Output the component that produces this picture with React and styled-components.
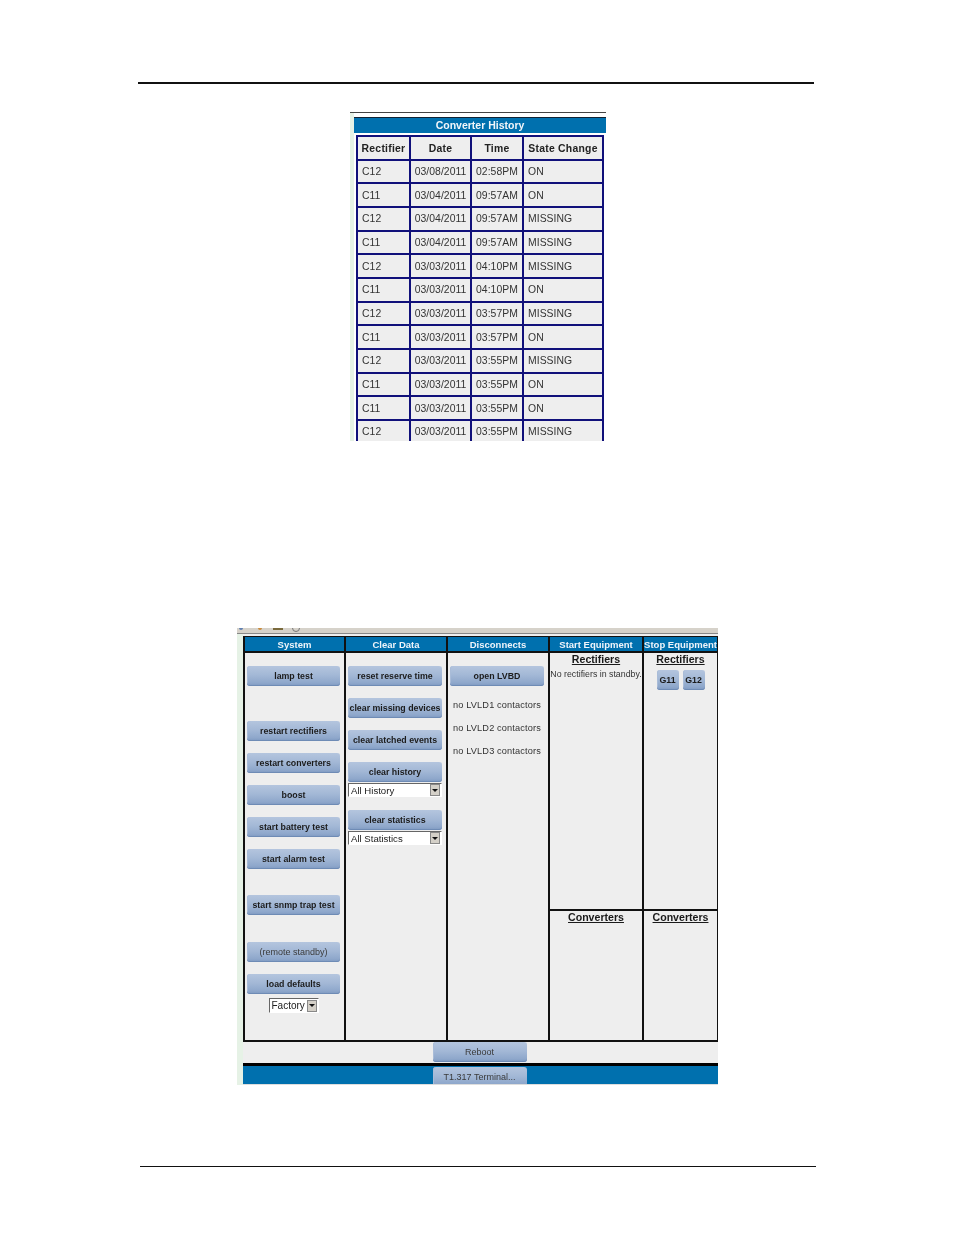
import styled, { createGlobalStyle } from "styled-components";

const GlobalStyle = createGlobalStyle`
	html, body {
		margin: 0;
		padding: 0;
		background: #fff;
	}
	body {
		font-family: "Liberation Sans", Arial, sans-serif;
		color: #1a1a1a;
	}
`;

const BLUE = "#0070ae";
const PANEL = "#eeeeee";
const NAVY = "#10107a";

const Page = styled.div`
	width: 954px;
	height: 1235px;
	padding-top: 82px;
	box-sizing: border-box;
	overflow: hidden;
`;

const Rule = styled.div`
	height: ${(p) => p.$h}px;
	width: 676px;
	margin-left: ${(p) => p.$left}px;
	margin-top: ${(p) => p.$top}px;
	background: #111;
`;

/* history screenshot */
const HistoryShot = styled.div`
	width: 256px;
	height: 329px;
	margin: 28px 0 0 350px;
	overflow: hidden;
	background: linear-gradient(90deg, #e6f2e6 4px, #fff 4px);
	border-top: 1px solid #444;
	box-sizing: border-box;
	padding: 4px 0 0 4px;
	filter: blur(0.25px);
`;

const HistoryTitle = styled.div`
	height: 16px;
	line-height: 14px;
	background: ${BLUE};
	border-top: 1px solid #123;
	box-sizing: border-box;
	color: #f2f6fa;
	font-size: 10.5px;
	font-weight: bold;
	text-align: center;
`;

const HistoryGrid = styled.div`
	display: grid;
	grid-template-columns: 53px 61px 52px 80px;
	grid-auto-rows: 23.67px;
	width: 246px;
	margin: 2px 0 0 2px;
	border-top: 2px solid ${NAVY};
	border-left: 2px solid ${NAVY};
	background: ${PANEL};
`;

const Cell = styled.div`
	display: flex;
	align-items: center;
	justify-content: ${(p) => (p.$head || p.$center ? "center" : "flex-start")};
	padding-left: ${(p) => (p.$head || p.$center ? 0 : 4)}px;
	padding-top: ${(p) => (p.$head ? 2 : 0)}px;
	border-right: 2px solid ${NAVY};
	border-bottom: 2px solid ${NAVY};
	font-size: 10.4px;
	font-weight: ${(p) => (p.$head ? "bold" : "normal")};
	letter-spacing: ${(p) => (p.$head ? "0.25px" : "0.05px")};
	color: ${(p) => (p.$head ? "#222" : "#333")};
	white-space: nowrap;
	box-sizing: border-box;
`;

/* control screenshot */
const ControlShot = styled.div`
	width: 481px;
	height: 457px;
	margin: 187px 0 0 237px;
	display: flex;
	flex-direction: column;
	overflow: hidden;
	background: #e6f2e6;
	filter: blur(0.25px);
`;

const ToolStrip = styled.div`
	height: 6px;
	flex: none;
	background: #d6d2ca;
	border-bottom: 1px solid #888;
	overflow: hidden;
	box-sizing: border-box;
	svg {
		display: block;
	}
`;

const ControlBody = styled.div`
	flex: 1;
	margin-left: 6px;
	display: flex;
	flex-direction: column;
	background: ${PANEL};
	min-height: 0;
`;

const Columns = styled.div`
	margin-top: 2px;
	height: 406px;
	flex: none;
	display: grid;
	grid-template-columns: 101px 102px 102px 94px 74px;
	border-left: 2px solid #111;
	border-bottom: 2px solid #111;
	box-sizing: border-box;
`;

const Column = styled.div`
	display: flex;
	flex-direction: column;
	border-right: 2px solid #111;
	min-width: 0;
	&:last-child {
		border-right: 1px solid #111;
	}
`;

const ColumnHead = styled.div`
	height: 14px;
	flex: none;
	background: ${BLUE};
	border-top: 1px solid #111;
	border-bottom: 2px solid #111;
	color: #eef4fa;
	font-size: 9.5px;
	font-weight: bold;
	line-height: 15px;
	text-align: center;
	white-space: nowrap;
	box-sizing: content-box;
`;

const Stack = styled.div`
	flex: 1;
	display: flex;
	flex-direction: column;
	align-items: center;
	padding: 13px 2px 0 0;
`;

const Btn = styled.button`
	width: ${(p) => p.$w || 94}px;
	height: ${(p) => p.$h || 20}px;
	flex: none;
	margin: ${(p) => p.$top || 0}px 0 0;
	padding: 0;
	border: 0;
	border-radius: 3px;
	background: linear-gradient(180deg, #b4c5de 0%, #a3b8d6 45%, #8ea7cb 85%, #7d98c0 100%);
	box-shadow: inset 0 -1px 0 #6e8bb5, inset 1px 0 0 #a9bcd8;
	color: ${(p) => (p.$dim ? "#3a3a3a" : "#1c1c1c")};
	font-family: inherit;
	font-size: ${(p) => (p.$dim ? 9 : 8.8)}px;
	font-weight: ${(p) => (p.$dim ? "normal" : "bold")};
	white-space: nowrap;
	text-align: center;
`;

const FakeSelect = styled.div`
	width: ${(p) => p.$w}px;
	height: ${(p) => p.$h || 14}px;
	flex: none;
	margin-top: ${(p) => p.$top || 1}px;
	display: flex;
	align-items: center;
	justify-content: space-between;
	padding: 0 1px 0 2px;
	background: #fff;
	border: 1px solid;
	border-color: #666 #fff #fff #666;
	box-sizing: border-box;
	font-size: ${(p) => p.$size || 9.6}px;
	color: #222;
`;

const ArrowBox = styled.span`
	width: 10px;
	height: 12px;
	background: #d4d0c8;
	border: 1px solid #888;
	box-sizing: border-box;
	display: flex;
	align-items: center;
	justify-content: center;
	&::after {
		content: "";
		border: 3px solid transparent;
		border-top: 3px solid #111;
		border-bottom: 0;
	}
`;

const Note = styled.div`
	font-size: 9.2px;
	letter-spacing: 0.15px;
	color: #333;
	margin-top: ${(p) => p.$top}px;
	white-space: nowrap;
`;

const Half = styled.div`
	height: ${(p) => p.$h}px;
	flex: none;
	display: flex;
	flex-direction: column;
	align-items: center;
	box-sizing: border-box;
	border-bottom: ${(p) => (p.$line ? "2px solid #111" : "0")};
`;

const SubHead = styled.div`
	font-size: 10.6px;
	font-weight: bold;
	text-decoration: underline;
	color: #1a1a1a;
	line-height: 12px;
`;

const Standby = styled.div`
	font-size: 8.8px;
	color: #333;
	margin-top: 4px;
	white-space: nowrap;
`;

const PairRow = styled.div`
	display: flex;
	gap: 4px;
	margin-top: 5px;
`;

const RebootRow = styled.div`
	height: 24px;
	flex: none;
	display: flex;
	justify-content: center;
	align-items: flex-start;
	padding-right: 2px;
	box-sizing: border-box;
	border-bottom: 3px solid #000;
`;

const TaskRow = styled.div`
	flex: 1;
	background: ${BLUE};
	display: flex;
	justify-content: center;
	align-items: flex-start;
	padding: 1px 2px 0 0;
	border-bottom: 1px solid #ddd;
	overflow: hidden;
`;

const rows = [
	["C12", "03/08/2011", "02:58PM", "ON"],
	["C11", "03/04/2011", "09:57AM", "ON"],
	["C12", "03/04/2011", "09:57AM", "MISSING"],
	["C11", "03/04/2011", "09:57AM", "MISSING"],
	["C12", "03/03/2011", "04:10PM", "MISSING"],
	["C11", "03/03/2011", "04:10PM", "ON"],
	["C12", "03/03/2011", "03:57PM", "MISSING"],
	["C11", "03/03/2011", "03:57PM", "ON"],
	["C12", "03/03/2011", "03:55PM", "MISSING"],
	["C11", "03/03/2011", "03:55PM", "ON"],
	["C11", "03/03/2011", "03:55PM", "ON"],
	["C12", "03/03/2011", "03:55PM", "MISSING"],
];

const History = () => (
	<HistoryShot>
		<HistoryTitle>Converter History</HistoryTitle>
		<HistoryGrid>
			{["Rectifier", "Date", "Time", "State Change"].map((h) => (
				<Cell $head key={h}>
					{h}
				</Cell>
			))}
			{rows.map((r, i) =>
				r.map((v, j) => (
					<Cell key={`${i}-${j}`} $center={j === 1 || j === 2}>
						{v}
					</Cell>
				))
			)}
		</HistoryGrid>
	</HistoryShot>
);

const Controls = () => (
	<ControlShot>
		<ToolStrip>
			<svg width="481" height="6" viewBox="0 0 481 6">
				<circle cx="4" cy="0" r="2" fill="#5f7fb0" />
				<circle cx="23" cy="0" r="2" fill="#c98b3c" />
				<rect x="36" y="0" width="10" height="2" fill="#7a6a3c" />
				<circle cx="59" cy="0" r="3.5" fill="none" stroke="#777" />
			</svg>
		</ToolStrip>
		<ControlBody>
			<Columns>
				<Column>
					<ColumnHead>System</ColumnHead>
					<Stack>
						<Btn $w={93}>lamp test</Btn>
						<Btn $w={93} $top={35}>
							restart rectifiers
						</Btn>
						<Btn $w={93} $top={12}>
							restart converters
						</Btn>
						<Btn $w={93} $top={12}>
							boost
						</Btn>
						<Btn $w={93} $top={12}>
							start battery test
						</Btn>
						<Btn $w={93} $top={12}>
							start alarm test
						</Btn>
						<Btn $w={93} $top={26}>
							start snmp trap test
						</Btn>
						<Btn $w={93} $top={27} $dim>
							(remote standby)
						</Btn>
						<Btn $w={93} $top={12}>
							load defaults
						</Btn>
						<FakeSelect $w={50} $h={15} $top={4} $size={10}>
							Factory
							<ArrowBox />
						</FakeSelect>
					</Stack>
				</Column>
				<Column>
					<ColumnHead>Clear Data</ColumnHead>
					<Stack>
						<Btn>reset reserve time</Btn>
						<Btn $top={12}>clear missing devices</Btn>
						<Btn $top={12}>clear latched events</Btn>
						<Btn $top={12}>clear history</Btn>
						<FakeSelect $w={94}>
							All History
							<ArrowBox />
						</FakeSelect>
						<Btn $top={13}>clear statistics</Btn>
						<FakeSelect $w={94}>
							All Statistics
							<ArrowBox />
						</FakeSelect>
					</Stack>
				</Column>
				<Column>
					<ColumnHead>Disconnects</ColumnHead>
					<Stack>
						<Btn>open LVBD</Btn>
						<Note $top={14}>no LVLD1 contactors</Note>
						<Note $top={13}>no LVLD2 contactors</Note>
						<Note $top={13}>no LVLD3 contactors</Note>
					</Stack>
				</Column>
				<Column>
					<ColumnHead>Start Equipment</ColumnHead>
					<Half $h={258} $line>
						<SubHead>Rectifiers</SubHead>
						<Standby>No rectifiers in standby.</Standby>
					</Half>
					<Half>
						<SubHead>Converters</SubHead>
					</Half>
				</Column>
				<Column>
					<ColumnHead>Stop Equipment</ColumnHead>
					<Half $h={258} $line>
						<SubHead>Rectifiers</SubHead>
						<PairRow>
							<Btn $w={22}>G11</Btn>
							<Btn $w={22}>G12</Btn>
						</PairRow>
					</Half>
					<Half>
						<SubHead>Converters</SubHead>
					</Half>
				</Column>
			</Columns>
			<RebootRow>
				<Btn $dim>Reboot</Btn>
			</RebootRow>
			<TaskRow>
				<Btn $dim>T1.317 Terminal...</Btn>
			</TaskRow>
		</ControlBody>
	</ControlShot>
);

export default function App() {
	return (
		<>
			<GlobalStyle />
			<Page>
				<Rule $h={2} $left={138} $top={0} />
				<History />
				<Controls />
				<Rule $h={1} $left={140} $top={81} />
			</Page>
		</>
	);
}
